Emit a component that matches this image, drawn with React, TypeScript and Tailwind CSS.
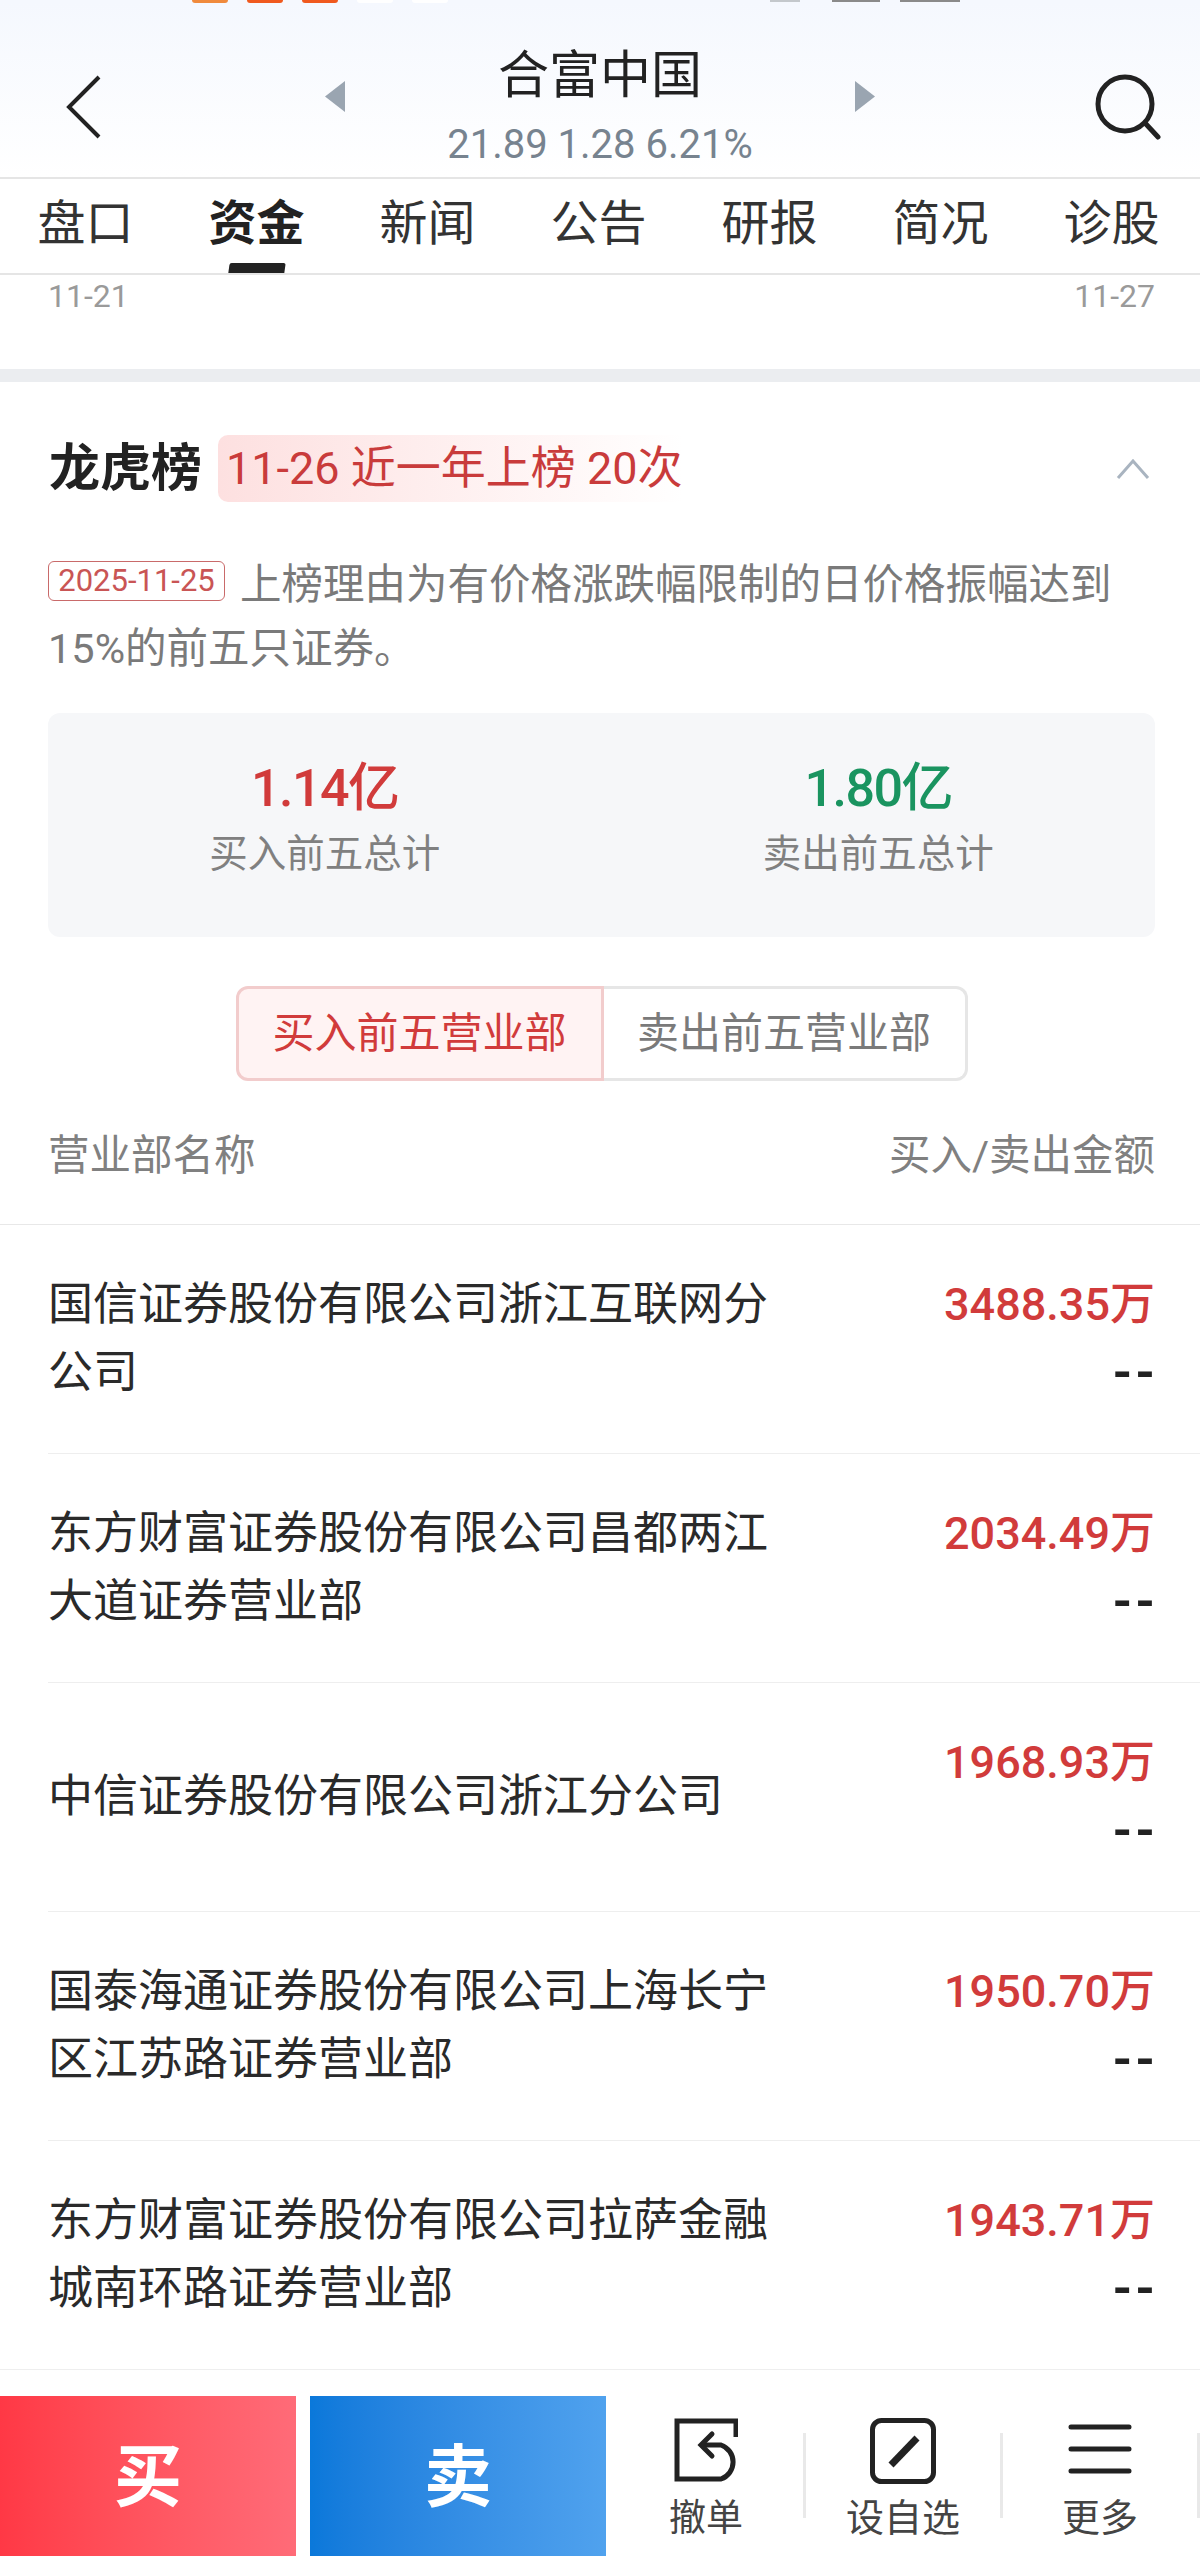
const tabs = ['盘口', '资金', '新闻', '公告', '研报', '简况', '诊股'];

const rows = [
  { name: '国信证券股份有限公司浙江互联网分公司', buy: '3488.35万' },
  { name: '东方财富证券股份有限公司昌都两江大道证券营业部', buy: '2034.49万' },
  { name: '中信证券股份有限公司浙江分公司', buy: '1968.93万' },
  { name: '国泰海通证券股份有限公司上海长宁区江苏路证券营业部', buy: '1950.70万' },
  { name: '东方财富证券股份有限公司拉萨金融城南环路证券营业部', buy: '1943.71万' },
];

function StatusRemnant() {
  return (
    <div className="flex h-[3px] pl-[192px]">
      <div className="flex gap-[19px]">
        <div className="h-[3px] w-[36px] rounded-b-[3px] bg-[#f08a3c]" />
        <div className="h-[3px] w-[36px] rounded-b-[3px] bg-[#f0591e]" />
        <div className="h-[3px] w-[36px] rounded-b-[3px] bg-[#f0591e]" />
        <div className="h-[3px] w-[36px] rounded-b-[3px] bg-white" />
        <div className="h-[3px] w-[36px] rounded-b-[3px] bg-white" />
      </div>
      <div className="ml-[322px] flex gap-[32px]">
        <div className="h-[2px] w-[30px] bg-[#c4c8cc]" />
        <div className="h-[2px] w-[48px] bg-[#8a8a8a]" />
        <div className="-ml-[12px] h-[2px] w-[60px] bg-[#8a8a8a]" />
      </div>
    </div>
  );
}

function Header() {
  return (
    <header className="h-[174px] bg-linear-to-b from-[#f5f8fe] to-white pt-[43px]">
      <div className="flex h-[121px] items-center pl-[66px]">
        <svg width="36" height="64" viewBox="0 0 36 64" fill="none" stroke="#222222" strokeWidth="4">
          <path d="M33 2 L3 32 L33 62" />
        </svg>
        <div className="ml-[223px] flex w-[550px] items-center justify-between">
          <svg className="mb-[20px]" width="20" height="31" viewBox="0 0 20 31" fill="#9aa5b1">
            <path d="M20 0 L0 15.5 L20 31 Z" />
          </svg>
          <div className="flex flex-col items-center">
            <div className="text-[51px] leading-[60px] text-[#222222]">合富中国</div>
            <div className="mt-[17px] text-[40px] leading-[44px] text-[#77838f]">21.89 1.28 6.21%</div>
          </div>
          <svg className="mb-[20px]" width="20" height="31" viewBox="0 0 20 31" fill="#9aa5b1">
            <path d="M0 0 L20 15.5 L0 31 Z" />
          </svg>
        </div>
        <svg className="ml-[220px]" width="68" height="66" viewBox="0 0 68 66" fill="none" stroke="#222222" strokeWidth="5">
          <circle cx="30" cy="30" r="27" />
          <path d="M50 49 L63 63" strokeLinecap="round" />
        </svg>
      </div>
    </header>
  );
}

function Tabs() {
  return (
    <nav className="grid h-[98px] grid-cols-7 border-y-2 border-[#e5e5e5] bg-white pr-[3px]">
      {tabs.map((tab, i) => (
        <div key={tab} className="flex flex-col items-center pt-[17px]">
          <div className={i === 1 ? 'text-[48px] font-bold leading-[56px] text-[#222222]' : 'text-[48px] leading-[56px] text-[#333333]'}>
            {tab}
          </div>
          {i === 1 && <div className="mt-[11px] h-[10px] w-[56px] -skew-x-[8deg] rounded-t-[2px] bg-[#222222]" />}
        </div>
      ))}
    </nav>
  );
}

function Summary() {
  return (
    <div className="ml-[48px] mr-[45px] mt-[32px] grid h-[224px] grid-cols-2 rounded-[12px] bg-[#f6f7f9] pt-[46px]">
      <div className="flex flex-col items-center">
        <div className="text-[52px] font-medium leading-[60px] tracking-[-1.5px] text-[#d13b3b]">1.14亿</div>
        <div className="mt-[13px] text-[38.5px] leading-[44px] text-[#808080]">买入前五总计</div>
      </div>
      <div className="flex flex-col items-center">
        <div className="text-[52px] font-medium leading-[60px] tracking-[-1.5px] text-[#1a9460]">1.80亿</div>
        <div className="mt-[13px] text-[38.5px] leading-[44px] text-[#808080]">卖出前五总计</div>
      </div>
    </div>
  );
}

function BottomBar() {
  return (
    <footer className="flex h-[160px] shrink-0 bg-white">
      <div className="flex w-[296px] items-center justify-center bg-linear-to-r from-[#ff3845] to-[#ff6b78] pt-[3px] text-[68px] font-bold text-white">买</div>
      <div className="ml-[14px] flex w-[296px] items-center justify-center bg-linear-to-r from-[#0a78da] to-[#50a2ee] pt-[3px] text-[68px] font-bold text-white">卖</div>
      <div className="flex flex-1">
        <div className="flex flex-1 flex-col items-center pl-[3px] pt-[22px]">
          <svg width="64" height="64" viewBox="0 0 64 64" fill="none" stroke="#222222" strokeWidth="5">
            <path d="M62 19 V3 H3 V61 H47 A18 18 0 0 0 47 27 H28" />
            <path d="M38 16 L27 27 L38 38" strokeLinecap="round" />
          </svg>
          <div className="mt-[15px] text-[37px] leading-[44px] text-[#444444]">撤单</div>
        </div>
        <div className="mt-[37px] h-[85px] w-[3px] bg-[#e9e9e9]" />
        <div className="flex flex-1 flex-col items-center pt-[22px]">
          <svg width="66" height="66" viewBox="0 0 66 66" fill="none" stroke="#222222">
            <rect x="2.5" y="2.5" width="61" height="61" rx="9" strokeWidth="5" />
            <path d="M47 20 L21 47" strokeWidth="7" />
          </svg>
          <div className="mt-[12px] text-[38px] leading-[44px] text-[#444444]">设自选</div>
        </div>
        <div className="mt-[37px] h-[85px] w-[3px] bg-[#e9e9e9]" />
        <div className="flex flex-1 flex-col items-center pt-[22px]">
          <svg width="64" height="64" viewBox="0 0 64 64" fill="none" stroke="#222222" strokeWidth="5" strokeLinecap="round">
            <path d="M3 9 H61 M3 31 H61 M3 53 H61" />
          </svg>
          <div className="mt-[14px] text-[38px] leading-[44px] text-[#444444]">更多</div>
        </div>
        <div className="mt-[37px] h-[85px] w-[3px] bg-[#e9e9e9]" />
      </div>
    </footer>
  );
}

export default function App() {
  return (
    <div className="flex h-[2556px] w-[1200px] flex-col overflow-hidden bg-white font-['Roboto','Noto_Sans_CJK_SC',sans-serif]">
      <main className="min-h-0 flex-1 overflow-hidden">
        <div className="bg-[#f5f8fe]">
          <StatusRemnant />
        </div>
        <Header />
        <Tabs />

        <div className="flex h-[94px] justify-between pl-[48px] pr-[45px] pt-[3px] text-[32px] leading-[36px] text-[#9a9a9a]">
          <span>11-21</span>
          <span>11-27</span>
        </div>
        <div className="h-[13px] bg-[#ebedf0]" />

        <section className="pt-[53px]">
          <div className="flex h-[67px] items-center pl-[48px] pr-[45px]">
            <h2 className="pl-[1px] text-[51px] font-bold leading-[60px] text-[#222222]">龙虎榜</h2>
            <div className="ml-[16px] flex h-[67px] items-center rounded-l-[10px] bg-linear-to-r from-[#fde0e0] to-white pl-[8px] text-[45px] leading-[67px] text-[#c93b3b]">
              11-26 近一年上榜 20次
            </div>
            <svg className="ml-auto mr-[5px]" width="34" height="20" viewBox="0 0 34 20" fill="none" stroke="#a9b4c0" strokeWidth="3">
              <path d="M2 19 L17 2 L32 19" />
            </svg>
          </div>

          <p className="ml-[48px] mr-[45px] mt-[51px] text-[41.5px] leading-[64px] text-[#7a7a7a]">
            <span className="mr-[15px] inline-block h-[40px] w-[177px] rounded-[6px] border border-[#c96a6a] text-center align-[8px] text-[31px] leading-[38px] text-[#c95555]">
              2025-11-25
            </span>
            上榜理由为有价格涨跌幅限制的日价格振幅达到15%的前五只证券。
          </p>

          <Summary />

          <div className="ml-[48px] mr-[45px] mt-[49px] flex justify-center text-[42px]">
            <div className="flex h-[95px] w-[368px] items-center justify-center rounded-l-[12px] border-[3px] border-[#f2cccc] bg-[#fff3f3] text-[#d13b3b]">
              买入前五营业部
            </div>
            <div className="flex h-[95px] w-[364px] items-center justify-center rounded-r-[12px] border-[3px] border-l-0 border-[#e6e6e6] text-[#7a7a7a]">
              卖出前五营业部
            </div>
          </div>

          <div className="mt-[50px] flex justify-between border-b border-[#e8e8e8] pb-[43px] pl-[48px] pr-[45px] text-[41.5px] leading-[50px] text-[#808080]">
            <span>营业部名称</span>
            <span>买入/卖出金额</span>
          </div>

          <div>
            {rows.map((row, i) => (
              <div
                key={row.name}
                className={
                  i === rows.length - 1
                    ? 'flex h-[229px] items-center justify-between border-b border-[#eeeeee] pl-[48px] pr-[45px]'
                    : 'ml-[48px] flex h-[229px] items-center justify-between border-b border-[#eeeeee] pr-[45px]'
                }
              >
                <div className="w-[722px] text-[45px] leading-[68px] text-[#2a2a2a]">{row.name}</div>
                <div className="text-right text-[45px] leading-[68px]">
                  <div className="font-medium text-[#d13b3b]">{row.buy}</div>
                  <div className="-mr-[3px] text-[50px] font-bold tracking-[3px] text-[#222222]">--</div>
                </div>
              </div>
            ))}
          </div>
        </section>
      </main>

      <BottomBar />
    </div>
  );
}
